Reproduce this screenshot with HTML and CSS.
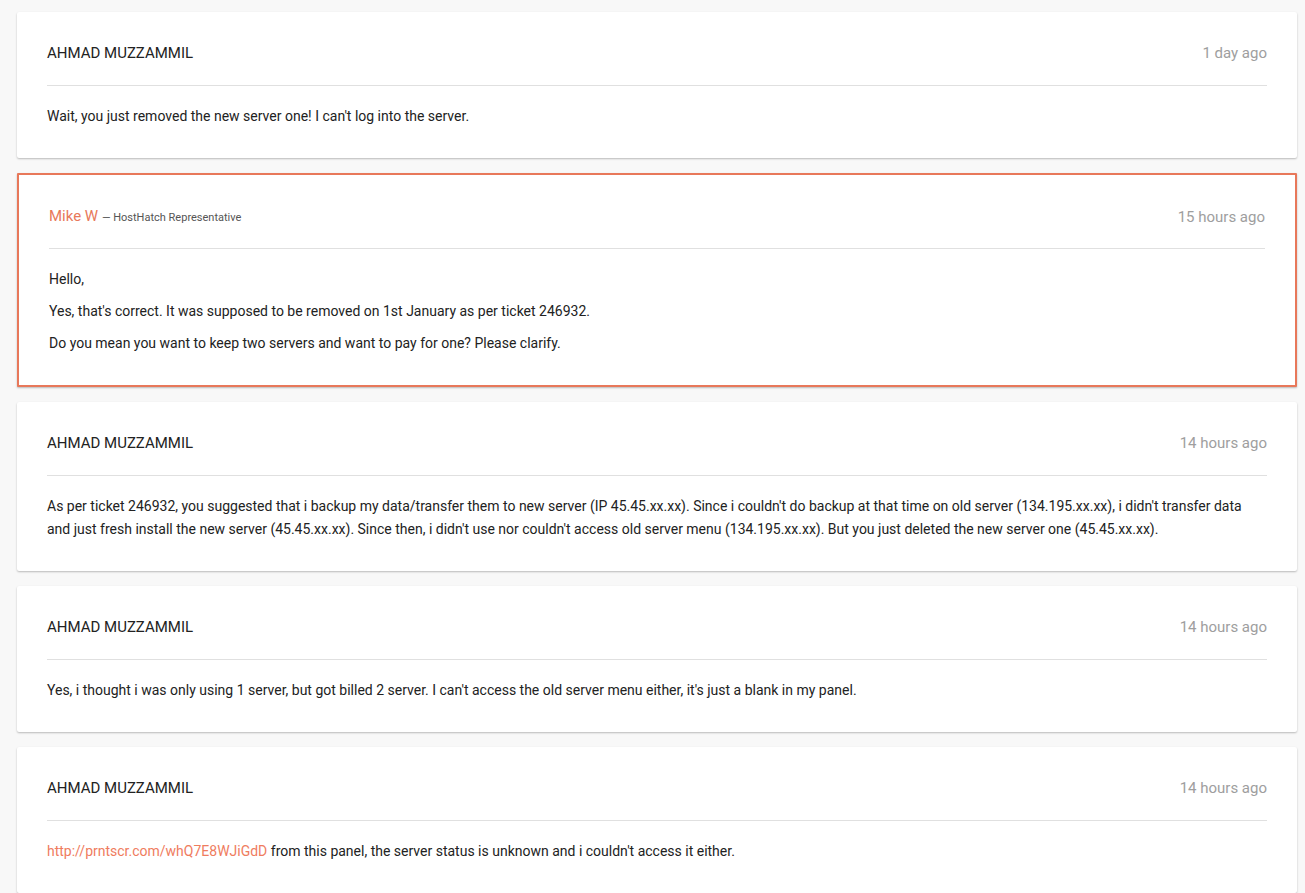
FILE: index.html
```html
<!DOCTYPE html>
<html lang="en">
<head>
  <meta charset="UTF-8">
  <title>Ticket Replies</title>
  <link rel="stylesheet" href="styles.css">
</head>
<body>

  <div class="thread">
    <!-- customer reply -->
    <div class="reply">
      <div class="reply-head">
        <span class="author">AHMAD MUZZAMMIL</span>
        <span class="time">1 day ago</span>
      </div>
      <div class="reply-body">
        <p>Wait, you just removed the new server one! I can't log into the server.</p>
      </div>
    </div>

    <!-- staff reply -->
    <div class="reply staff">
      <div class="reply-head">
        <span class="author">Mike W <small>— HostHatch Representative</small></span>
        <span class="time">15 hours ago</span>
      </div>
      <div class="reply-body">
        <p>Hello,</p>
        <p>Yes, that's correct. It was supposed to be removed on 1st January as per ticket 246932.</p>
        <p>Do you mean you want to keep two servers and want to pay for one? Please clarify.</p>
      </div>
    </div>

    <div class="reply">
      <div class="reply-head">
        <span class="author">AHMAD MUZZAMMIL</span>
        <span class="time">14 hours ago</span>
      </div>
      <div class="reply-body">
        <p>As per ticket 246932, you suggested that i backup my data/transfer them to new server (IP 45.45.xx.xx). Since i couldn't do backup at that time on old server (134.195.xx.xx), i didn't transfer data and just fresh install the new server (45.45.xx.xx). Since then, i didn't use nor couldn't access old server menu (134.195.xx.xx). But you just deleted the new server one (45.45.xx.xx).</p>
      </div>
    </div>

    <div class="reply">
      <div class="reply-head">
        <span class="author">AHMAD MUZZAMMIL</span>
        <span class="time">14 hours ago</span>
      </div>
      <div class="reply-body">
        <p>Yes, i thought i was only using 1 server, but got billed 2 server. I can't access the old server menu either, it's just a blank in my panel.</p>
      </div>
    </div>

    <div class="reply">
      <div class="reply-head">
        <span class="author">AHMAD MUZZAMMIL</span>
        <span class="time">14 hours ago</span>
      </div>
      <div class="reply-body">
        <p><a href="#">http://prntscr.com/whQ7E8WJiGdD</a> from this panel, the server status is unknown and i couldn't access it either.</p>
      </div>
    </div>
  </div>

</body>
</html>
```

FILE: styles.css
```css
body {
  margin: 0;
  font-family: Roboto, "Liberation Sans", Arial, sans-serif;
  font-size: 14px;
  color: #222;
  background-color: #f8f8f8;
}
.thread {
  padding: 12px 8px 0 17px;
  display: flex;
  flex-direction: column;
  gap: 15px;
}
.reply {
  background: #fff;
  padding: 30px;
  box-shadow: 0 1px 2px rgba(0, 0, 0, 0.25);
  border-radius: 2px;
}
.reply.staff {
  border: 2px solid #e8785a;
  border-radius: 1px;
}
.reply-head {
  display: flex;
  justify-content: space-between;
  align-items: center;
  line-height: 22px;
  padding-bottom: 21px;
  border-bottom: 1px solid #e0e0e0;
}
.staff .reply-head {
  padding-bottom: 19px;
}
.author {
  font-size: 15px;
  color: #222;
}
.staff .author {
  color: #e8785a;
}
.author small {
  font-size: 11px;
  color: #555;
}
.time {
  font-size: 15px;
  color: #9e9e9e;
}
.reply-body {
  padding-top: 19px;
  line-height: 23px;
}
.reply-body p {
  margin: 10px 0 0;
}
.staff .reply-body p {
  margin-top: 9px;
}
.reply-body p:first-child {
  margin-top: 0;
}
.reply-body a {
  color: #ef7c5e;
  text-decoration: none;
}
```
